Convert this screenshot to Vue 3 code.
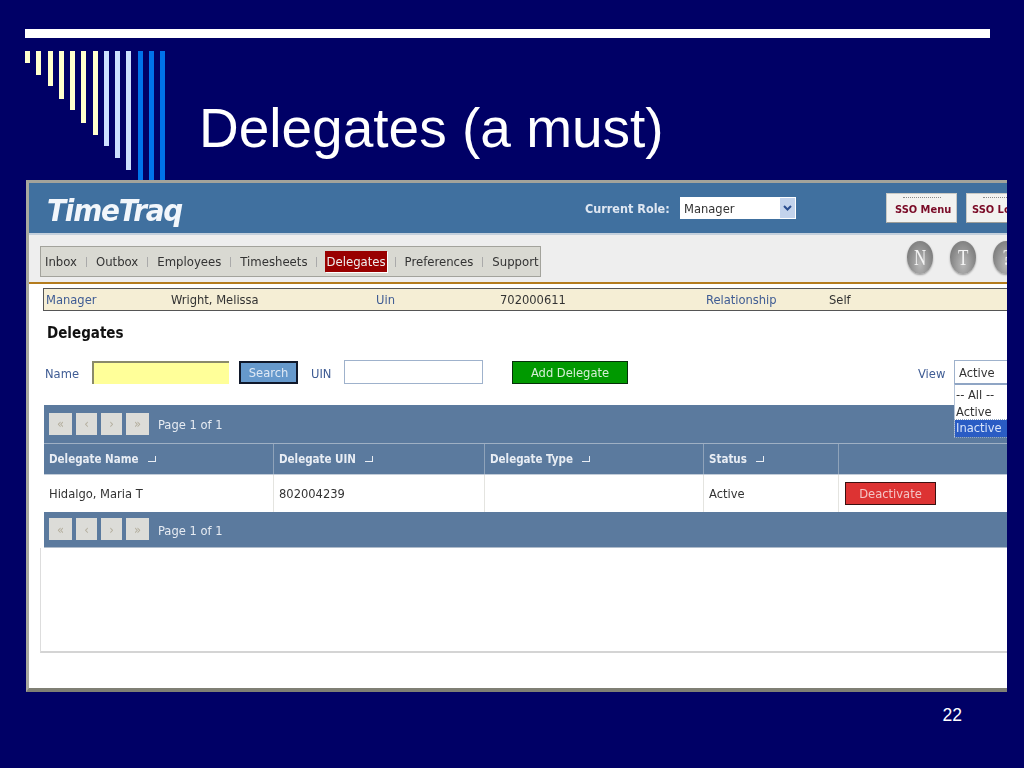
<script setup>
const bars = [
  { h: 12, c: '#ffffcc' }, { h: 24, c: '#ffffcc' }, { h: 35, c: '#ffffcc' }, { h: 48, c: '#ffffcc' },
  { h: 59, c: '#ffffcc' }, { h: 72, c: '#ffffcc' }, { h: 84, c: '#ffffcc' }, { h: 95, c: '#cce0ff' },
  { h: 107, c: '#cce0ff' }, { h: 119, c: '#cce0ff' }, { h: 129, c: '#0073ea' }, { h: 129, c: '#0073ea' },
  { h: 129, c: '#0073ea' }
]
const tabs = ['Inbox', 'Outbox', 'Employees', 'Timesheets', 'Delegates', 'Preferences', 'Support']
const pager = ['«', '‹', '›', '»']
const cols = ['Delegate Name', 'Delegate UIN', 'Delegate Type', 'Status', '']
</script>

<template>
  <div class="slide">
    <div class="rule"></div>
    <div class="head">
      <div class="bars">
        <span v-for="(b, i) in bars" :key="i" class="bar" :style="{ height: b.h + 'px', background: b.c }"></span>
      </div>
      <h1 class="title">Delegates (a must)</h1>
    </div>

    <div class="shot">
      <div class="brand">
        <div class="logo">TimeTraq</div>
        <div class="role">
          <span class="role-label">Current Role:</span>
          <div class="role-select">
            <span>Manager</span>
            <span class="role-arrow">
              <svg width="9" height="8" viewBox="0 0 9 8"><path d="M1 2l3.500 3.500L8 2" fill="none" stroke="#2a4d8f" stroke-width="2"/></svg>
            </span>
          </div>
        </div>
        <div class="sso">
          <div class="sso-btn"><i></i>SSO Menu</div>
          <div class="sso-btn"><i></i>SSO Logout</div>
        </div>
      </div>

      <div class="toolbar">
        <div class="tabs">
          <template v-for="(t, i) in tabs" :key="t">
            <span v-if="i" class="sep"></span>
            <span class="tab" :class="{ active: t === 'Delegates' }">{{ t }}</span>
          </template>
        </div>
        <div class="round-icons">
          <span class="round"><b>N</b></span>
          <span class="round"><b>T</b></span>
          <span class="round"><b>?</b></span>
        </div>
      </div>

      <div class="main">
        <div class="info">
          <span class="lnk">Manager</span><span>Wright, Melissa</span>
          <span class="lnk">Uin</span><span>702000611</span>
          <span class="lnk">Relationship</span><span>Self</span>
        </div>

        <h2 class="section">Delegates</h2>

        <div class="form">
          <span class="lnk name-label">Name</span>
          <div class="in-name"></div>
          <div class="btn-search">Search</div>
          <span class="lnk uin-label">UIN</span>
          <div class="in-uin"></div>
          <div class="btn-add">Add Delegate</div>
          <span class="lnk view-label">View</span>
          <div class="view">
            <div class="view-box">Active</div>
            <div class="view-menu">
              <div>-- All --</div>
              <div>Active</div>
              <div class="sel">Inactive</div>
            </div>
          </div>
        </div>

        <div class="pager pager-top">
          <span v-for="p in pager" :key="p" class="pg">{{ p }}</span>
          <span class="pg-text">Page 1 of 1</span>
        </div>
        <div class="thead">
          <div v-for="(c, i) in cols" :key="i" class="th">
            <template v-if="c">{{ c }}<i class="sort"></i></template>
          </div>
        </div>
        <div class="tbody">
          <div class="td">Hidalgo, Maria T</div>
          <div class="td">802004239</div>
          <div class="td"></div>
          <div class="td">Active</div>
          <div class="td"><span class="btn-off">Deactivate</span></div>
        </div>
        <div class="pager pager-bottom">
          <span v-for="p in pager" :key="p" class="pg">{{ p }}</span>
          <span class="pg-text">Page 1 of 1</span>
        </div>
        <div class="blank"></div>
      </div>
    </div>

    <div class="pageno">22</div>
  </div>
</template>

<style>
html, body { margin: 0; background: #000066; }
</style>

<style scoped>
.slide {
  width: 1024px;
  height: 768px;
  box-sizing: border-box;
  padding-top: 29px;
  background: #000066;
  overflow: hidden;
  display: flex;
  flex-direction: column;
  font-family: "Liberation Sans", Arial, sans-serif;
}
.rule { height: 9px; margin: 0 34px 0 25px; background: #fff; flex: none; }
.head { height: 142px; flex: none; display: flex; margin-left: 25px; }
.bars { display: flex; gap: 6.250px; padding-top: 13px; align-items: flex-start; }
.bar { width: 5px; display: block; }
.title {
  margin: 55px 0 0 34px;
  font-size: 55px;
  font-weight: 400;
  line-height: 70px;
  color: #fff;
  white-space: nowrap;
}

.shot {
  width: 981px;
  height: 512px;
  margin-left: 26px;
  flex: none;
  box-sizing: border-box;
  background: #fff;
  border-top: 3px solid #a3a39b;
  border-left: 3px solid #a8a89e;
  border-bottom: 4px solid #7f7f74;
  overflow: hidden;
  display: flex;
  flex-direction: column;
  font-family: "DejaVu Sans Condensed", "DejaVu Sans", sans-serif;
  font-stretch: condensed;
  font-size: 12.800px;
  color: #333;
  filter: blur(0.350px);
}

.brand {
  height: 50px;
  flex: none;
  display: flex;
  align-items: center;
  background: #40709f;
  border-bottom: 2px solid #c4d0dc;
}
.logo {
  width: 539px;
  padding-left: 18px;
  box-sizing: border-box;
  flex: none;
  font-size: 31px;
  font-weight: 700;
  font-style: italic;
  letter-spacing: -1.200px;
  color: #f2f6fb;
  margin-top: 4px;
  white-space: nowrap;
}
.role { display: flex; align-items: center; width: 319px; flex: none; padding-left: 17px; box-sizing: border-box; }
.role-label { width: 95px; flex: none; font-weight: 700; color: #dfe7f2; white-space: nowrap; font-size: 12.500px; }
.role-select {
  width: 116px;
  height: 22px;
  flex: none;
  box-sizing: border-box;
  display: flex;
  justify-content: space-between;
  align-items: center;
  padding-left: 4px;
  background: #fff;
  color: #333;
}
.role-arrow {
  width: 15px;
  height: 20px;
  margin-right: 1px;
  display: flex;
  align-items: center;
  justify-content: center;
  background: #c3d3ec;
}
.sso { display: flex; gap: 9px; flex: none; margin-left: -1px; }
.sso-btn {
  position: relative;
  width: 71px;
  height: 30px;
  flex: none;
  box-sizing: border-box;
  display: flex;
  align-items: center;
  padding: 3px 0 0 8px;
  background: #f2f2f0;
  border: 1px solid #c9c9c4;
  border-bottom-color: #9d9d98;
  font-size: 11px;
  font-weight: 700;
  color: #7a0a26;
  white-space: nowrap;
}
.sso-btn + .sso-btn { padding-left: 5px; width: 84px; }
.sso-btn i {
  position: absolute;
  top: 3px;
  left: 16px;
  width: 38px;
  border-top: 1px dotted #888;
}

.toolbar {
  height: 47px;
  flex: none;
  display: flex;
  justify-content: space-between;
  align-items: flex-start;
  background: #eeeeee;
  border-bottom: 2px solid #b47c1e;
}
.tabs {
  margin: 11px 0 0 11px;
  height: 31px;
  width: 501px;
  box-sizing: border-box;
  display: flex;
  align-items: center;
  padding-left: 4px;
  background: #d9d9d2;
  border: 1px solid #a3a39c;
  color: #333;
  white-space: nowrap;
}
.tab { font-size: 13px; }
.tab.active {
  background: #990000;
  color: #eee;
  padding: 3px 1px;
  margin: 0 -1px;
  box-shadow: 1px 1px 0 #fff;
}
.sep { width: 1px; height: 10px; background: #aaa; margin: 0 9px; flex: none; }
.round-icons { display: flex; gap: 17px; margin-top: 6px; margin-right: -12px; flex: none; }
.round {
  width: 26px;
  height: 33px;
  border-radius: 50%;
  display: flex;
  align-items: center;
  justify-content: center;
  background: radial-gradient(ellipse at 50% 70%, #b9b9b9 0%, #8a8a8a 60%, #6a6a6a 100%);
  box-shadow: 0 1px 2px #999;
  font-family: "Liberation Serif", serif;
  font-size: 20px;
  color: #f4f4f4;
}
.round b { font-weight: 400; display: block; transform: scale(0.85, 1.2); }

.main { flex: 1; display: flex; flex-direction: column; min-height: 0; padding-left: 11px; position: relative; }
.lnk { color: #3f5c94; }
.info {
  margin: 4px 0 0 3px;
  height: 23px;
  box-sizing: border-box;
  display: grid;
  grid-template-columns: 125px 205px 124px 206px 123px 1fr;
  align-items: center;
  padding-left: 2px;
  background: #f5eed5;
  border: 1px solid #555;
  border-right: 0;
  white-space: nowrap;
}
.section {
  margin: 12px 0 0 7px;
  height: 20px;
  line-height: 20px;
  font-size: 15px;
  font-weight: 700;
  color: #111;
}
.form {
  margin-top: 17px;
  height: 24px;
  display: flex;
  align-items: center;
  padding-left: 5px;
}
.name-label { width: 47px; flex: none; padding-top: 3px; }
.in-name {
  width: 137px;
  height: 23px;
  flex: none;
  box-sizing: border-box;
  background: #ffff99;
  border-top: 2px solid #8a8a6a;
  border-left: 2px solid #8a8a6a;
}
.btn-search {
  width: 59px;
  height: 23px;
  margin-left: 10px;
  flex: none;
  box-sizing: border-box;
  display: flex;
  align-items: center;
  justify-content: center;
  background: #6699cc;
  border: 2px solid #10182a;
  color: #dfe9f5;
}
.uin-label { width: 33px; margin-left: 13px; flex: none; padding-top: 3px; }
.in-uin { width: 139px; height: 24px; flex: none; box-sizing: border-box; border: 1px solid #9fb2cc; }
.btn-add {
  width: 116px;
  height: 23px;
  margin-left: 29px;
  flex: none;
  box-sizing: border-box;
  display: flex;
  align-items: center;
  justify-content: center;
  background: #009900;
  border: 1px solid #06300a;
  color: #d5efd5;
}
.view-label { width: 36px; margin-left: 290px; flex: none; padding-top: 3px; }
.view { width: 60px; height: 24px; flex: none; position: relative; }
.view-box {
  height: 24px;
  box-sizing: border-box;
  padding: 4px 0 0 4px;
  border: 1px solid #9fb2cc;
  background: #fff;
}
.view-menu {
  position: absolute;
  left: 0;
  top: 23px;
  width: 60px;
  height: 54px;
  box-sizing: border-box;
  padding-top: 2px;
  background: #fff;
  border-top: 2px solid #8fa5c4;
  border-left: 1px solid #b5c4d8;
  line-height: 16.500px;
  color: #333;
  z-index: 2;
}
.view-menu div { padding-left: 1px; white-space: nowrap; }
.view-menu .sel { background: #2a5cc4; color: #d8e4fa; outline: 1px dotted #8fa5c4; }

.pager {
  display: flex;
  align-items: center;
  background: #5b7a9e;
  padding-left: 5px;
  color: #e6ebf2;
  flex: none;
  margin-left: 4px;
}
.pager-top { margin-top: 21px; height: 38px; }
.pager-bottom { height: 36px; border-bottom: 1px solid #b0bccb; box-sizing: border-box; }
.pg {
  width: 21px;
  height: 22px;
  margin: -1px 4px 0 0;
  flex: none;
  display: flex;
  align-items: center;
  justify-content: center;
  background: #dcdcd8;
  color: #b3ad9c;
}
.pg:first-child, .pg:nth-child(4) { width: 23px; }
.pg-text { margin: 1px 0 0 5px; }
.thead, .tbody {
  display: grid;
  grid-template-columns: 230px 211px 219px 135px 1fr;
  margin-left: 4px;
  flex: none;
}
.thead { height: 32px; background: #5b7a9e; border-top: 1px solid #9fb0c4; border-bottom: 1px solid #c2ccd8; box-sizing: border-box; }
.th {
  display: flex;
  align-items: center;
  padding-left: 5px;
  font-weight: 700;
  font-size: 11.500px;
  color: #e8edf4;
  border-right: 1px solid #8fa3ba;
  white-space: nowrap;
}
.th:last-child, .td:last-child { border-right: 0; }
.sort { width: 7px; height: 5px; margin-left: 9px; border-right: 1px solid #e8edf4; border-bottom: 1px solid #e8edf4; }
.tbody { height: 37px; }
.td {
  display: flex;
  align-items: center;
  padding-left: 5px;
  border-right: 1px solid #e4e4e0;
  color: #333;
  white-space: nowrap;
}
.btn-off {
  width: 91px;
  height: 23px;
  margin-left: 1px;
  box-sizing: border-box;
  display: flex;
  align-items: center;
  justify-content: center;
  background: #dd3333;
  border: 1px solid #3a1010;
  color: #f3c4c4;
}
.blank { height: 105px; border-left: 1px solid #ddd; border-bottom: 2px solid #d4d4d4; box-sizing: border-box; flex: none; }

.pageno {
  width: 962px;
  margin-top: 13px;
  text-align: right;
  font-size: 17.500px;
  line-height: 20px;
  color: #fff;
}
</style>
